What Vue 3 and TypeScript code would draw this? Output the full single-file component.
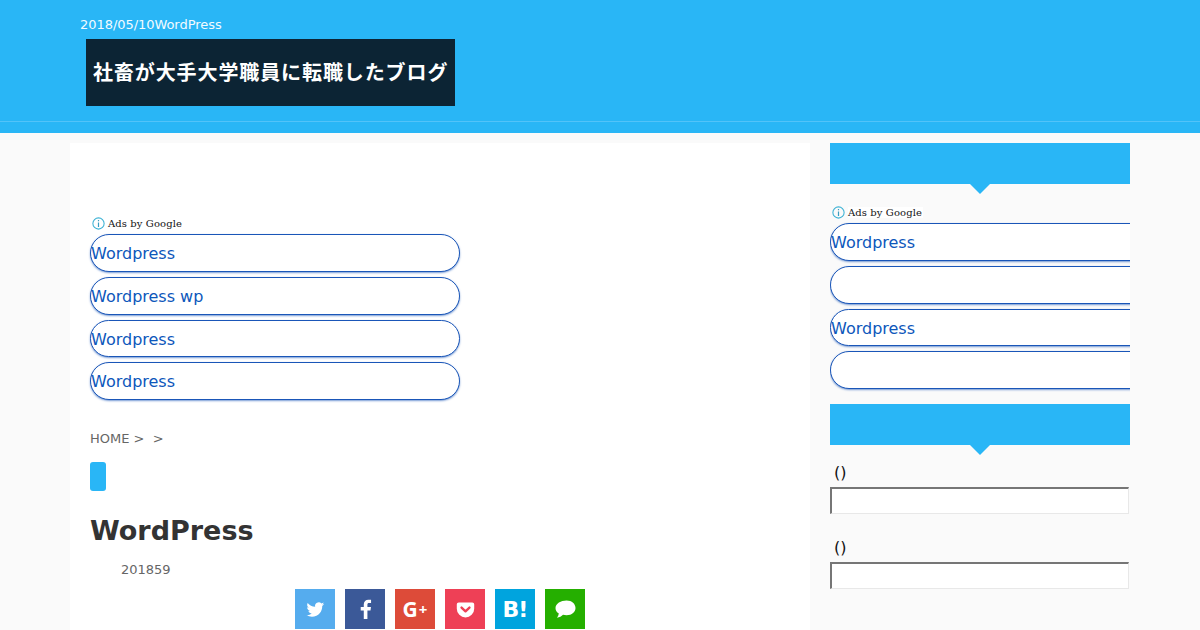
<script setup lang="ts">
const mainAds: string[] = ['Wordpress', 'Wordpress wp', 'Wordpress', 'Wordpress']
const sideAds: string[] = ['Wordpress', '', 'Wordpress', '']
</script>

<template>
  <div class="page">
    <header class="header">
      <div class="header-inner">
        <p class="tagline">2018/05/10WordPress</p>
        <div class="logo">社畜が大手大学職員に転職したブログ</div>
      </div>
    </header>
    <div class="nav"></div>
    <div class="columns">
      <main class="card">
        <div class="adlabel main-label">
          <svg class="info" viewBox="0 0 12 12" width="13" height="13"><circle cx="6" cy="6" r="5.2" fill="none" stroke="#3fb3d5" stroke-width="1"/><path d="M6 2.800v1.200M6 5v4.200" stroke="#3a9cc0" stroke-width="1.100" fill="none"/></svg>
          <span>Ads by Google</span>
        </div>
        <div class="adlist">
          <a v-for="(t, i) in mainAds" :key="i" class="adbtn">{{ t }}</a>
        </div>
        <p class="crumbs">HOME &gt;&nbsp;&nbsp;&gt;</p>
        <div class="chip"></div>
        <h1 class="title">WordPress</h1>
        <p class="date">201859</p>
        <div class="share">
          <span class="sbtn tw"><svg viewBox="0 0 24 24" width="19" height="19"><path fill="#fff" d="M23 5.100c-.8.400-1.700.600-2.600.700.900-.600 1.600-1.400 2-2.500-.9.500-1.900.900-2.900 1.100A4.600 4.600 0 0 0 11.600 8.600C7.800 8.400 4.400 6.600 2.100 3.800c-1.200 2.100-.6 4.800 1.400 6.100-.7 0-1.400-.2-2.100-.6 0 2.200 1.600 4.200 3.700 4.600-.7.200-1.400.2-2.100.1.600 1.900 2.300 3.200 4.300 3.200A9.300 9.300 0 0 1 .5 19.100a13 13 0 0 0 7 2.100c8.500 0 13.300-7.200 13-13.600.9-.7 1.700-1.500 2.500-2.500z"/></svg></span>
          <span class="sbtn fb"><svg viewBox="0 0 24 24" width="23" height="23"><path fill="#fff" d="M14 22v-9h3.200l.5-3.700H14V7c0-1.100.3-1.800 1.800-1.800h2V1.900c-.4 0-1.500-.2-2.800-.2-2.800 0-4.800 1.700-4.800 4.900v2.700H7V13h3.200v9z"/></svg></span>
          <span class="sbtn gp"><span class="gp-g">G</span><span class="gp-plus">+</span></span>
          <span class="sbtn pk"><svg viewBox="0 0 24 24" width="19" height="19"><path fill="#fff" d="M3.500 3h17A2.500 2.500 0 0 1 23 5.500V11a11 11 0 0 1-22 0V5.500A2.500 2.500 0 0 1 3.500 3z"/><path fill="none" stroke="#ee4056" stroke-width="3" stroke-linecap="round" stroke-linejoin="round" d="M7 9.500l5 4.800 5-4.800"/></svg></span>
          <span class="sbtn hb">B!</span>
          <span class="sbtn ln"><svg viewBox="0 0 24 24" width="24" height="24"><path fill="#fff" d="M13.500 3.500C8 3.500 2.500 6.500 2.500 11c0 2.400 1.300 4.300 3.300 5.600-.2 1.600-.8 3-1.800 4.200 2.600-.3 4.500-1.500 6-3 1.200.3 2.300.4 3.500.4 5.500 0 9-3.200 9-7.200S19 3.500 13.500 3.500z"/></svg></span>
        </div>
      </main>
      <aside class="side">
        <div class="widget-head"></div>
        <div class="adlabel side-label">
          <svg class="info" viewBox="0 0 12 12" width="13" height="13"><circle cx="6" cy="6" r="5.2" fill="none" stroke="#3fb3d5" stroke-width="1"/><path d="M6 2.800v1.200M6 5v4.200" stroke="#3a9cc0" stroke-width="1.100" fill="none"/></svg>
          <span>Ads by Google</span>
        </div>
        <div class="adlist side-ads">
          <a v-for="(t, i) in sideAds" :key="i" class="adbtn">{{ t }}</a>
        </div>
        <div class="widget-head second"></div>
        <div class="field first">
          <label>()</label>
          <div class="input"></div>
        </div>
        <div class="field">
          <label>()</label>
          <div class="input"></div>
        </div>
      </aside>
    </div>
  </div>
</template>

<style>
html, body { margin: 0; background: #fafafa; }
</style>

<style scoped>
.page {
  width: 1200px;
  height: 630px;
  overflow: hidden;
  font-family: "DejaVu Sans", sans-serif;
  background: #fafafa;
}
.header {
  height: 121px;
  background: #29b6f6;
  border-bottom: 1px solid #52c3f9;
}
.header-inner {
  padding: 17px 0 0 80px;
}
.tagline {
  margin: 0;
  font-size: 13px;
  letter-spacing: -0.05px;
  line-height: 15px;
  color: #f2fbff;
}
.logo {
  box-sizing: border-box;
  width: 369px;
  height: 67px;
  margin: 7px 0 0 6px;
  background: #0c2434;
  color: #fff;
  font-family: "Noto Sans CJK JP", sans-serif;
  font-weight: 700;
  font-size: 20px;
  letter-spacing: 0.9px;
  line-height: 65px;
  white-space: nowrap;
  padding-left: 7px;
}
.nav {
  height: 11px;
  background: #29b6f6;
}
.columns {
  display: flex;
  gap: 20px;
  padding: 10px 0 0 70px;
  align-items: flex-start;
}
.card {
  width: 740px;
  height: 490px;
  box-sizing: border-box;
  padding: 71px 20px 0;
  background: #fff;
}
.adlabel {
  display: flex;
  align-items: center;
  gap: 3px;
  height: 18px;
  padding-left: 2px;
  font-family: "DejaVu Serif", serif;
  font-size: 10px;
  letter-spacing: 0.1px;
  color: #111;
}
.adlabel span {
  background: #fff;
  padding-right: 1px;
}
.adlist {
  display: flex;
  flex-direction: column;
  gap: 5px;
  margin-top: 2.300px;
}
.adbtn {
  box-sizing: border-box;
  display: block;
  width: 370px;
  height: 37.700px;
  border: 1px solid #1a56b8;
  border-radius: 19px;
  background: #fff;
  box-shadow: 0 1px 2px rgba(26, 86, 184, 0.6);
  color: #0d57bb;
  font-size: 16px;
  line-height: 38.700px;
}
.crumbs {
  margin: 31px 0 0;
  font-size: 13px;
  line-height: 16px;
  color: #666;
  white-space: pre;
}
.chip {
  width: 16px;
  height: 29px;
  margin-top: 15px;
  border-radius: 3px;
  background: #29b6f6;
}
.title {
  margin: 24px 0 0;
  font-size: 27px;
  line-height: 32px;
  font-weight: 700;
  color: #333;
}
.date {
  margin: 15px 0 0 31px;
  font-size: 13px;
  line-height: 16px;
  color: #666;
}
.share {
  display: flex;
  gap: 10px;
  margin: 11px 0 0 205px;
}
.sbtn {
  width: 40px;
  height: 40px;
  flex: none;
  display: flex;
  align-items: center;
  justify-content: center;
  color: #fff;
  font-family: "Open Sans", sans-serif;
  font-weight: 700;
}
.tw { background: #55acee; }
.fb { background: #3b5998; }
.gp { background: #dd4b39; }
.gp-g { font-size: 21px; }
.gp-plus { font-size: 15px; margin-left: 1px; }
.pk { background: #ee4056; }
.hb { background: #00a4de; font-size: 22px; font-weight: 700; font-family: "DejaVu Sans", sans-serif; letter-spacing: -1px; }
.ln { background: #25af00; }
.side {
  width: 300px;
  overflow: hidden;
}
.widget-head {
  position: relative;
  height: 41px;
  background: #29b6f6;
}
.widget-head::after {
  content: "";
  position: absolute;
  left: 50%;
  bottom: -10px;
  margin-left: -10px;
  border-style: solid;
  border-width: 10px 10px 0;
  border-color: #29b6f6 transparent transparent;
}
.side-label {
  margin-top: 19px;
}
.side-ads {
  width: 370px;
}
.second {
  margin-top: 15px;
}
.field {
  margin-top: 24px;
}
.field.first {
  margin-top: 18px;
}
.field label {
  display: block;
  margin-left: 4px;
  height: 20px;
  font-size: 16px;
  line-height: 20px;
  color: #111;
}
.input {
  box-sizing: border-box;
  width: 299px;
  height: 27px;
  margin-top: 4px;
  background: #fff;
  border-style: solid;
  border-width: 2px 1px 1px 2px;
  border-color: #767676 #e8e8e8 #e8e8e8 #767676;
}
</style>
